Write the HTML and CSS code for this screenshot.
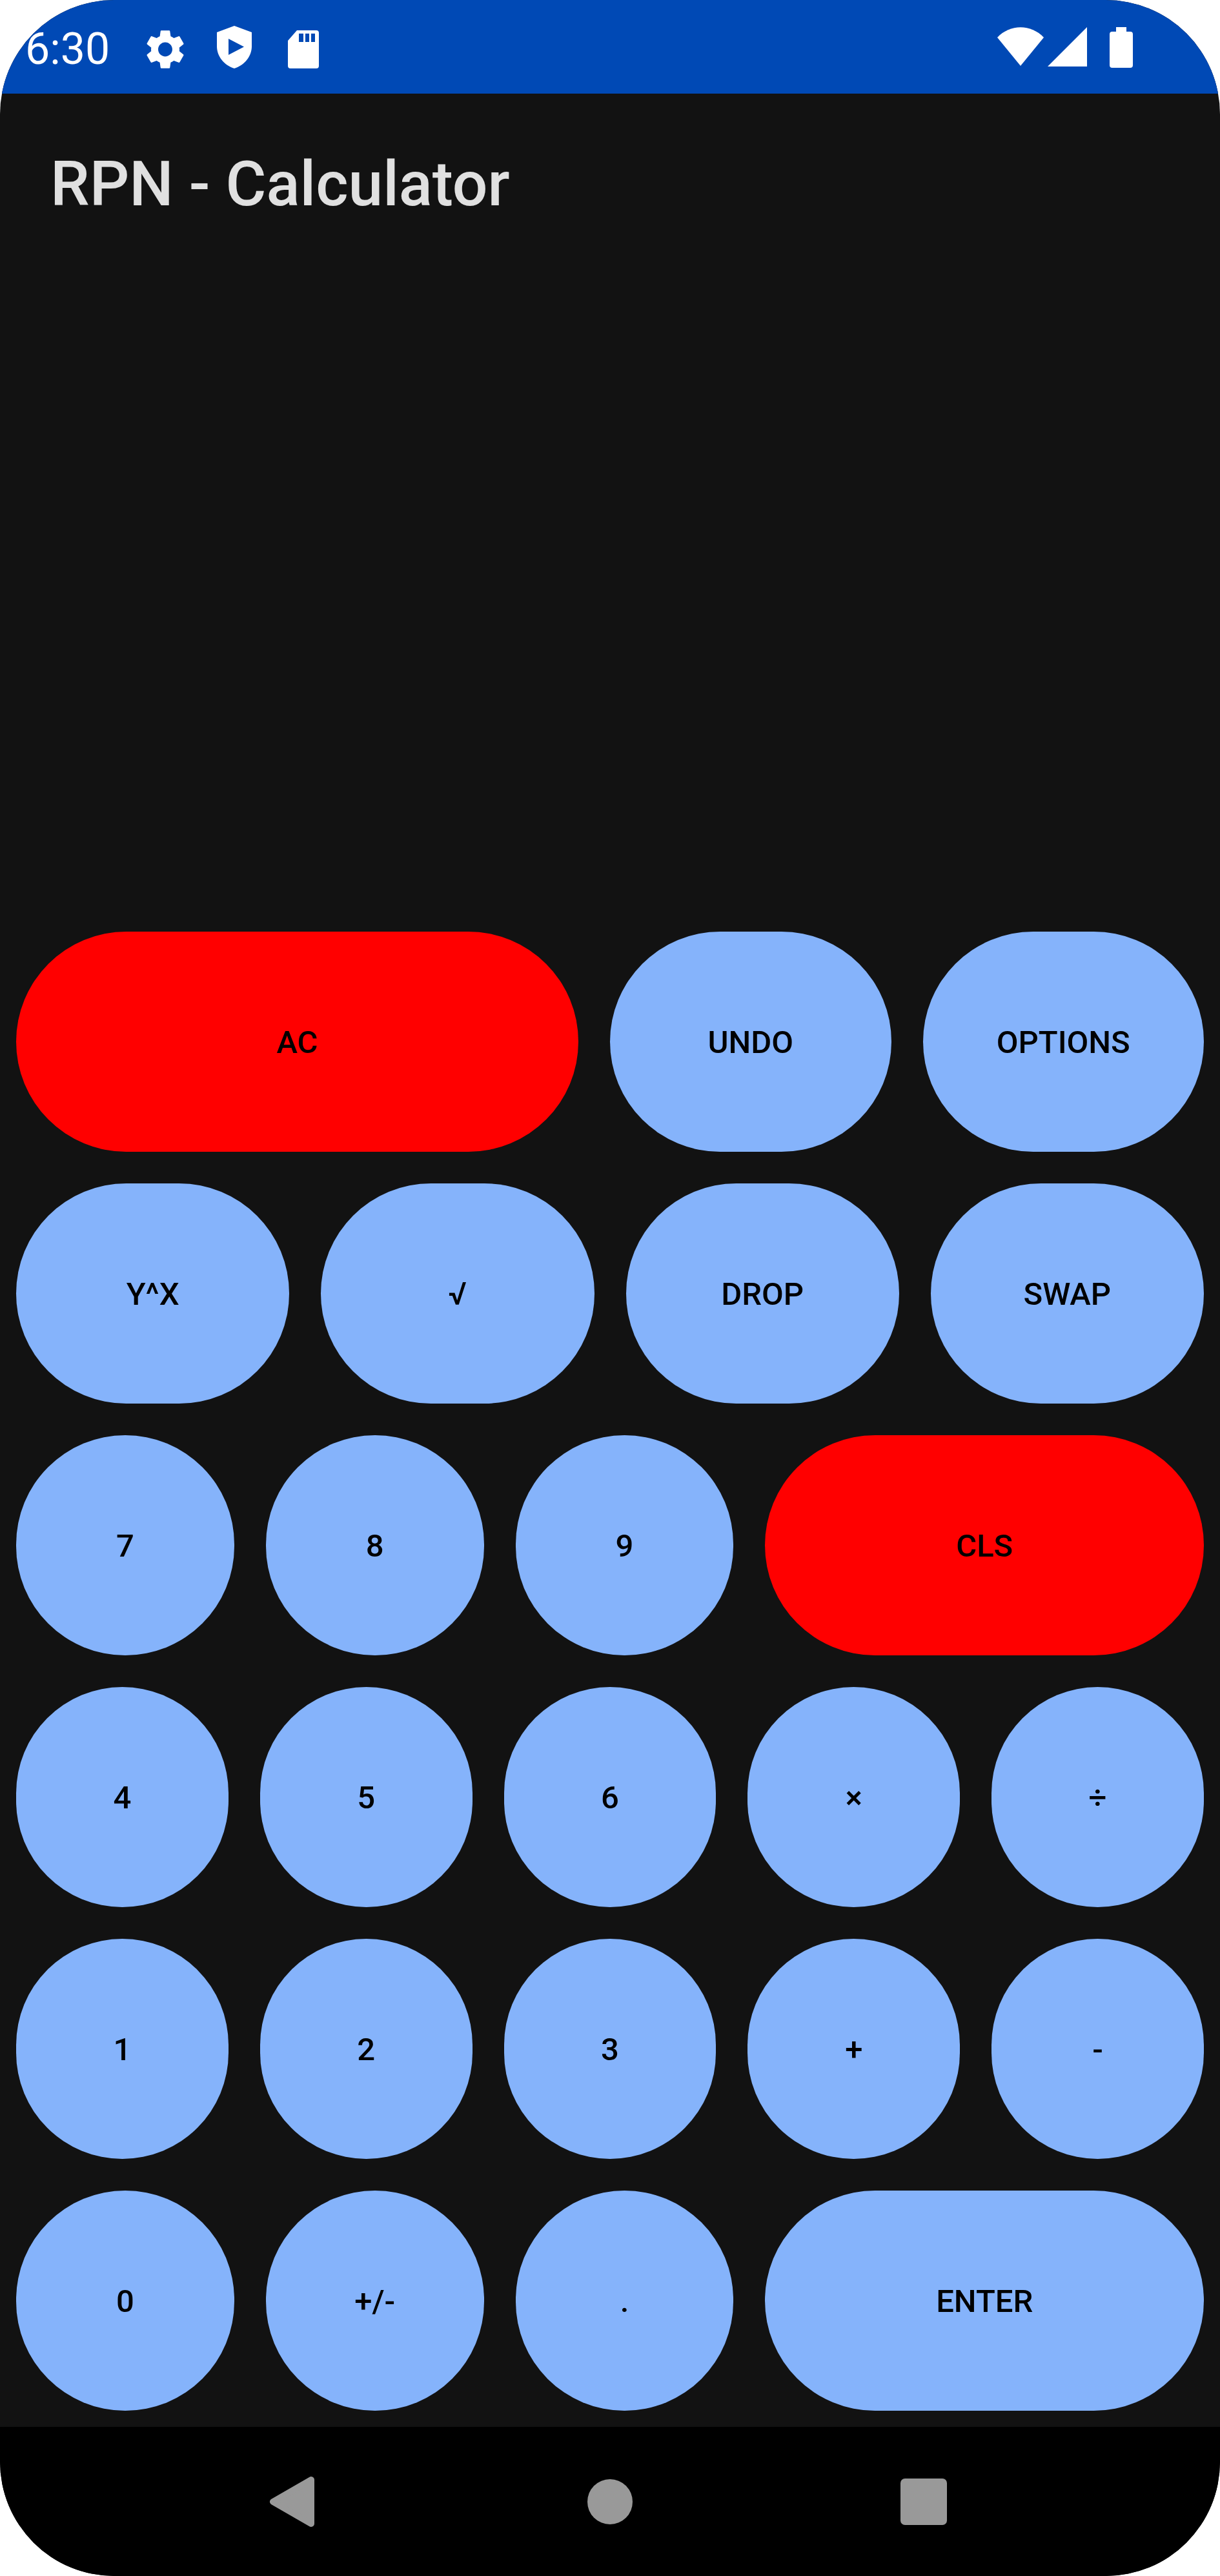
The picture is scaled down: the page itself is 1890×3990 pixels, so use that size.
FILE: index.html
```html
<!DOCTYPE html>
<html lang="en">
<head>
    <meta charset="UTF-8">
    <title>RPN - Calculator</title>
    <link rel="stylesheet" href="styles.css">
</head>
<body>
    <div class="phone">
        <div class="status-bar">
            <span class="clock">6:30</span>
            <svg class="icon-gear" viewBox="2.7 2 18.6 20"><path fill-rule="evenodd" d="M19.14 12.94c.04-.3.06-.61.06-.94 0-.32-.02-.64-.07-.94l2.03-1.58c.18-.14.23-.41.12-.61l-1.92-3.32c-.12-.22-.37-.29-.59-.22l-2.39.96c-.5-.38-1.03-.7-1.62-.94l-.36-2.54c-.04-.24-.24-.41-.48-.41h-3.84c-.24 0-.43.17-.47.41l-.36 2.54c-.59.24-1.13.57-1.62.94l-2.39-.96c-.22-.08-.47 0-.59.22L2.74 8.87c-.12.21-.08.47.12.61l2.03 1.58c-.05.3-.09.63-.09.94s.02.64.07.94l-2.03 1.58c-.18.14-.23.41-.12.61l1.92 3.32c.12.22.37.29.59.22l2.39-.96c.5.38 1.03.7 1.62.94l.36 2.54c.05.24.24.41.48.41h3.84c.24 0 .44-.17.47-.41l.36-2.54c.59-.24 1.13-.56 1.62-.94l2.39.96c.22.08.47 0 .59-.22l1.92-3.32c.12-.22.07-.47-.12-.61l-2.01-1.58zM12 15.6c-1.98 0-3.6-1.62-3.6-3.6s1.62-3.6 3.6-3.6 3.6 1.62 3.6 3.6-1.62 3.6-3.6 3.6z"/></svg>
            <svg class="icon-shield" viewBox="0 0 54 66"><path fill-rule="evenodd" d="M27 0L54 10V32C54 47 43 61 27 66C11 61 0 47 0 32V10ZM18 20V45L42 32.500Z"/></svg>
            <svg class="icon-sd" viewBox="0 0 48 59"><path fill-rule="evenodd" d="M14 0H44Q48 0 48 4V55Q48 59 44 59H4Q0 59 0 55V16ZM17 5V18H24V5ZM27 5V18H33V5ZM36 5V18H42V5Z"/></svg>
            <div class="status-right">
                <svg class="icon-wifi" viewBox="0 0 72 60"><path d="M0 16C20 -5 52 -5 72 16L36 60Z"/></svg>
                <svg class="icon-cell" viewBox="0 0 61 61"><path d="M61 0V61H0Z"/></svg>
                <svg class="icon-battery" viewBox="0 0 36 63"><path d="M10 0H26V7H32Q36 7 36 11V59Q36 63 32 63H4Q0 63 0 59V11Q0 7 4 7H10Z"/></svg>
            </div>
        </div>

        <div class="content">
            <h1 class="title">RPN - Calculator</h1>

            <div class="keypad">
                <div class="key-row">
                    <button class="key key-red key-wide">AC</button>
                    <button class="key">UNDO</button>
                    <button class="key">OPTIONS</button>
                </div>
                <div class="key-row">
                    <button class="key">Y^X</button>
                    <button class="key">√</button>
                    <button class="key">DROP</button>
                    <button class="key">SWAP</button>
                </div>
                <div class="key-row">
                    <button class="key">7</button>
                    <button class="key">8</button>
                    <button class="key">9</button>
                    <button class="key key-red key-end">CLS</button>
                </div>
                <div class="key-row">
                    <button class="key">4</button>
                    <button class="key">5</button>
                    <button class="key">6</button>
                    <button class="key">×</button>
                    <button class="key">÷</button>
                </div>
                <div class="key-row">
                    <button class="key">1</button>
                    <button class="key">2</button>
                    <button class="key">3</button>
                    <button class="key">+</button>
                    <button class="key">-</button>
                </div>
                <div class="key-row">
                    <button class="key">0</button>
                    <button class="key">+/-</button>
                    <button class="key">.</button>
                    <button class="key key-end">ENTER</button>
                </div>
            </div>
        </div>

        <div class="nav-bar">
            <svg class="icon-back" viewBox="0 0 69 78"><path d="M64 5V73L5 39Z"/></svg>
            <div class="icon-home"></div>
            <div class="icon-recent"></div>
        </div>
    </div>
</body>
</html>
```

FILE: styles.css
```css
body {
    margin: 0;
    background-color: #fff;
    font-family: Roboto, "Liberation Sans", sans-serif;
}
svg {
    display: block;
    flex: none;
}
.phone {
    width: 1890px;
    height: 3990px;
    display: flex;
    flex-direction: column;
    background-color: #121212;
    border-radius: 177px;
    overflow: hidden;
}

/* status bar */
.status-bar {
    height: 145px;
    flex: none;
    display: flex;
    align-items: center;
    padding: 0 135px 0 39px;
    background-color: #0049b5;
    fill: #fff;
    color: #fff;
}
.clock {
    width: 188px;
    font-size: 68px;
    margin-top: 6px;
}
.icon-gear {
    width: 58px;
    height: 61px;
    margin: 8px 51px 0 0;
}
.icon-shield {
    width: 54px;
    height: 66px;
    margin-right: 56px;
}
.icon-sd {
    width: 48px;
    height: 59px;
    margin-top: 8px;
}
.status-right {
    margin-left: auto;
    display: flex;
    align-items: flex-start;
    padding-top: 1px;
}
.icon-wifi {
    width: 72px;
    height: 60px;
    margin-right: 6px;
}
.icon-cell {
    width: 61px;
    height: 61px;
    margin-right: 35px;
}
.icon-battery {
    width: 36px;
    height: 63px;
}

/* main area */
.content {
    flex: 1;
    display: flex;
    flex-direction: column;
    justify-content: space-between;
}
.title {
    margin: 0;
    padding: 86px 0 0 78px;
    font-size: 96.5px;
    font-weight: 500;
    line-height: 108px;
    color: #e0e0e0;
}
.keypad {
    display: flex;
    flex-direction: column;
    gap: 49px;
    padding: 0 25px 25px;
}
.key-row {
    display: flex;
    gap: 49px;
}
.key {
    flex: 1 1 0;
    height: 341px;
    padding: 2px 0 0;
    border: none;
    border-radius: 999px;
    background-color: #85b3fb;
    color: #000;
    font-family: inherit;
    font-size: 49px;
    font-weight: 500;
}
.key-wide {
    flex-grow: 2;
}
.key-end {
    flex-grow: 2.012;
}
.key-red {
    background-color: #f00;
}

/* navigation bar */
.nav-bar {
    height: 231px;
    flex: none;
    display: flex;
    align-items: center;
    background-color: #000;
    padding-left: 418px;
}
.icon-back {
    width: 69px;
    height: 78px;
    margin-right: 423px;
    fill: #999;
    stroke: #999;
    stroke-width: 10;
    stroke-linejoin: round;
}
.icon-home {
    width: 70px;
    height: 70px;
    margin-right: 415px;
    border-radius: 50%;
    background-color: #999;
}
.icon-recent {
    width: 72px;
    height: 72px;
    border-radius: 7px;
    background-color: #999;
}
```
